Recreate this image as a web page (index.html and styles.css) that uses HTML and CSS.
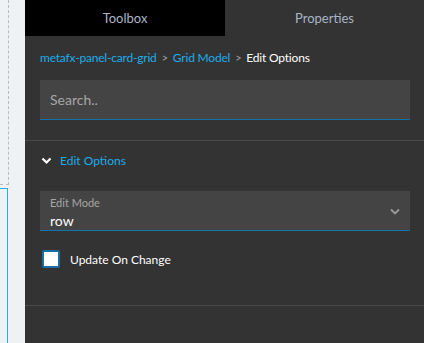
FILE: index.html
```html
<!DOCTYPE html>
<html lang="en">
<head>
    <meta charset="UTF-8">
    <title>Properties</title>
    <link rel="stylesheet" href="styles.css">
</head>
<body>
    <div class="canvas-strip">
        <div class="guide-box"></div>
        <div class="selected-box"></div>
    </div>

    <div class="panel">
        <div class="tabs">
            <div class="tab">Toolbox</div>
            <div class="tab active">Properties</div>
        </div>

        <div class="breadcrumb">
            <span class="crumb-link">metafx-panel-card-grid</span>
            <span class="crumb-sep">&gt;</span>
            <span class="crumb-link">Grid Model</span>
            <span class="crumb-sep">&gt;</span>
            <span class="crumb-current">Edit Options</span>
        </div>

        <div class="search-box">
            <input class="search-input" type="text" placeholder="Search..">
        </div>

        <div class="section">
            <div class="section-header">
                <svg width="11" height="8" viewBox="0 0 11 8" fill="none" stroke="#ffffff" stroke-width="2.2">
                    <polyline points="1.5 1.5 5.5 5.5 9.5 1.5"></polyline>
                </svg>
                <span class="section-title">Edit Options</span>
            </div>

            <div class="select-field">
                <div class="select-text">
                    <span class="select-label">Edit Mode</span>
                    <span class="select-value">row</span>
                </div>
                <svg class="select-arrow" width="10" height="7" viewBox="0 0 10 7" fill="none" stroke="#9a9a9a" stroke-width="1.8">
                    <polyline points="1 1.5 5 5.5 9 1.5"></polyline>
                </svg>
            </div>

            <label class="checkbox-row">
                <span class="checkbox"></span>
                <span class="checkbox-label">Update On Change</span>
            </label>
        </div>
    </div>
</body>
</html>
```

FILE: styles.css
```css
* {
    margin: 0;
    padding: 0;
    box-sizing: border-box;
    font-family: 'Lato', 'Open Sans', sans-serif;
}

body {
    display: flex;
    height: 343px;
    overflow: hidden;
    background-color: #333333;
}

.canvas-strip {
    width: 25px;
    flex-shrink: 0;
    background-color: #eef2f5;
}

.guide-box {
    width: 9px;
    height: 185px;
    border-right: 1px dashed #b8bcc0;
    border-bottom: 1px dashed #b8bcc0;
}

.selected-box {
    width: 8px;
    height: 160px;
    margin-top: 3px;
    border-top: 1px solid #1eb4ea;
    border-right: 1px solid #1eb4ea;
}

.panel {
    flex: 1;
    display: flex;
    flex-direction: column;
    background-color: #333333;
}

.tabs {
    display: grid;
    grid-template-columns: 200px 1fr;
    height: 36px;
}

.tab {
    display: flex;
    align-items: center;
    justify-content: center;
    background-color: #000000;
    color: #a9b4c6;
    font-size: 13px;
}

.tab.active {
    background-color: #333333;
}

.breadcrumb {
    display: flex;
    align-items: center;
    gap: 5px;
    padding: 0 15px 1px;
    height: 44px;
    font-size: 12px;
    letter-spacing: -0.2px;
}

.crumb-link {
    color: #1eacea;
}

.crumb-sep {
    color: #a0a0a0;
    font-size: 11px;
}

.crumb-current {
    color: #ffffff;
}

.search-box {
    margin: 0 14px 0 15px;
    height: 40px;
    background-color: #444444;
    border-bottom: 1px solid #1473a8;
}

.search-input {
    width: 100%;
    height: 100%;
    border: none;
    outline: none;
    background: none;
    padding: 0 10px;
    color: #ffffff;
    font-size: 14px;
}

.search-input::placeholder {
    color: #a6a6a6;
}

.section {
    margin-top: 20px;
    height: 166px;
    border-top: 1px solid #4a4a4a;
    border-bottom: 1px solid #4a4a4a;
    padding: 0 14px 0 15px;
}

.section-header {
    display: flex;
    align-items: center;
    gap: 8px;
    height: 38px;
    padding: 1px 0 0 1px;
}

.section-title {
    color: #1eacea;
    font-size: 12px;
}

.select-field {
    display: flex;
    align-items: center;
    justify-content: space-between;
    margin-top: 12px;
    height: 40px;
    padding: 0 10px;
    background-color: #444444;
    border-bottom: 1px solid #1473a8;
}

.select-text {
    display: flex;
    flex-direction: column;
    align-self: flex-start;
    padding-top: 5px;
}

.select-label {
    color: #a6a6a6;
    font-size: 11px;
    line-height: 14px;
}

.select-value {
    color: #ffffff;
    font-size: 14px;
    line-height: 20px;
    margin-top: 1px;
}

.select-arrow {
    margin-top: 2px;
}

.checkbox-row {
    display: flex;
    align-items: center;
    gap: 10px;
    margin-top: 19px;
    padding-left: 2px;
}

.checkbox {
    width: 18px;
    height: 18px;
    border: 2px solid #1a6ea4;
    border-radius: 2px;
    background-color: #ffffff;
}

.checkbox-label {
    color: #ffffff;
    font-size: 12px;
}
```
